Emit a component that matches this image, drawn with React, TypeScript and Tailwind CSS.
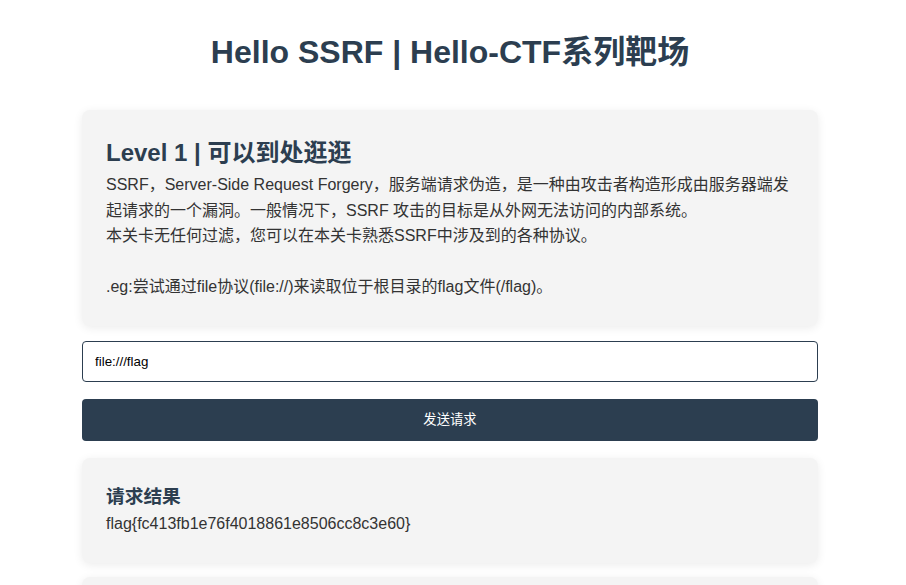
import React from "react";

export default function App() {
  const font = { fontFamily: '"Liberation Sans", Arial, "Noto Sans CJK SC", sans-serif' };
  return (
    <div className="min-h-[585px] bg-white text-[#333]" style={font}>
      <div className="w-[900px]">
        <div className="mx-auto max-w-[800px] px-8 pt-[28px]">
          <h1 className="text-center text-[32px] font-bold leading-[48px] text-[#2c3e50]">
            Hello SSRF | Hello-CTF系列靶场
          </h1>
          <div className="mt-[34px] rounded-lg bg-[#f4f4f4] px-6 pt-6 pb-[26px] shadow-[0_2px_10px_rgba(0,0,0,0.08)]">
            <h2 className="text-[24px] font-bold leading-[38px] text-[#2c3e50]">Level 1 | 可以到处逛逛</h2>
            <p className="text-[16px] leading-[25.6px] text-[#333]">
              SSRF，Server-Side Request Forgery，服务端请求伪造，是一种由攻击者构造形成由服务器端发起请求的一个漏洞。一般情况下，SSRF 攻击的目标是从外网无法访问的内部系统。
              <br />
              本关卡无任何过滤，您可以在本关卡熟悉SSRF中涉及到的各种协议。
              <br />
              <br />
              .eg:尝试通过file协议(file://)来读取位于根目录的flag文件(/flag)。
            </p>
          </div>
          <input
            readOnly
            value="file:///flag"
            className="mt-[15px] block h-[41px] w-full rounded border border-[#2c3e50] bg-white px-3 text-[13.33px] text-black outline-none"
          />
          <button className="mt-[17px] block h-[42px] w-full rounded bg-[#2c3e50] text-[13.33px] text-white">
            发送请求
          </button>
          <div className="mt-[17px] rounded-lg bg-[#f4f4f4] px-6 pt-6 pb-[26px] shadow-[0_2px_10px_rgba(0,0,0,0.08)]">
            <h3 className="text-[18.72px] font-bold leading-[29px] text-[#2c3e50]">请求结果</h3>
            <p className="text-[16px] leading-[25.6px] text-[#333]">flag{"{"}fc413fb1e76f4018861e8506cc8c3e60{"}"}</p>
          </div>
          <div className="mt-[14px] h-[100px] rounded-lg bg-[#f4f4f4] shadow-[0_2px_10px_rgba(0,0,0,0.08)]"></div>
        </div>
      </div>
    </div>
  );
}
